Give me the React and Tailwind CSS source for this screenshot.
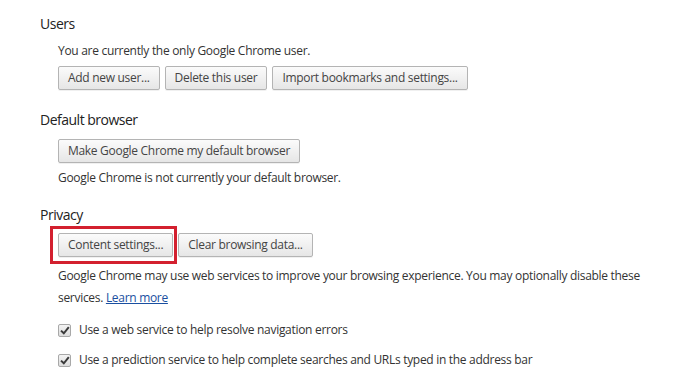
import { useState } from 'react';

function Btn({ children }) {
  return (
    <button
      type="button"
      className="h-6 px-[9px] rounded-[2px] border border-[#b4b4b4] bg-gradient-to-b from-[#fbfbfb] to-[#e6e6e6] text-[12px] tracking-[-0.3px] text-[#444] leading-none shadow-[0_1px_0_rgba(0,0,0,0.06)]"
    >
      {children}
    </button>
  );
}

function Check({ label, checked, onChange }) {
  return (
    <label className="flex items-center gap-[8px] h-[16px]">
      <span
        onClick={onChange}
        className="w-[13px] h-[13px] rounded-[2px] border border-[#a8a8a8] bg-gradient-to-b from-[#f4f4f4] to-[#dcdcdc] flex items-center justify-center"
      >
        {checked && (
          <svg width="10" height="9" viewBox="0 0 10 9">
            <path d="M1 4.6 L3.8 7.3 L8.8 1.2" fill="none" stroke="#3a3a3a" strokeWidth="2" />
          </svg>
        )}
      </span>
      <span>{label}</span>
    </label>
  );
}

export default function App() {
  const [navErrors, setNavErrors] = useState(true);
  const [prediction, setPrediction] = useState(true);

  return (
    <div className="w-[694px] h-[373px] bg-white text-[#333] text-[12px] tracking-[-0.3px] pl-10 pt-[15px] font-['Open_Sans',sans-serif] overflow-hidden">
      {/* Users */}
      <h3 className="text-[14px] tracking-[-0.5px] leading-[18px] text-[#222]">Users</h3>
      <div className="pl-[18px]">
        <p className="mt-[9px] leading-[18px]">You are currently the only Google Chrome user.</p>
        <div className="mt-[6px] flex gap-[5px]">
          <Btn>Add new user...</Btn>
          <Btn>Delete this user</Btn>
          <Btn>Import bookmarks and settings...</Btn>
        </div>
      </div>

      {/* Default browser */}
      <h3 className="mt-[21px] text-[14px] tracking-[-0.5px] leading-[18px] text-[#222]">Default browser</h3>
      <div className="pl-[18px]">
        <div className="mt-[10px]">
          <Btn>Make Google Chrome my default browser</Btn>
        </div>
        <p className="mt-[6px] leading-[18px]">Google Chrome is not currently your default browser.</p>
      </div>

      {/* Privacy */}
      <h3 className="mt-[19px] text-[14px] tracking-[-0.5px] leading-[18px] text-[#222]">Privacy</h3>
      <div className="pl-[18px]">
        <div className="mt-[2px] flex items-center gap-[1px]">
          <div className="-ml-[8px] border-[3px] border-[#d3202f] pl-[5px] pr-[1px] py-[4px] flex">
            <Btn>Content settings...</Btn>
          </div>
          <Btn>Clear browsing data...</Btn>
        </div>
        <p className="mt-[1px] leading-[22px] w-[590px]">
          Google Chrome may use web services to improve your browsing experience. You may optionally disable these
          services. <a href="#" className="text-[#1a4fa0] underline">Learn more</a>
        </p>
        <div className="mt-[13px] flex flex-col gap-[14px]">
          <Check label="Use a web service to help resolve navigation errors" checked={navErrors} onChange={() => setNavErrors(!navErrors)} />
          <Check
            label="Use a prediction service to help complete searches and URLs typed in the address bar"
            checked={prediction}
            onChange={() => setPrediction(!prediction)}
          />
        </div>
      </div>
    </div>
  );
}
